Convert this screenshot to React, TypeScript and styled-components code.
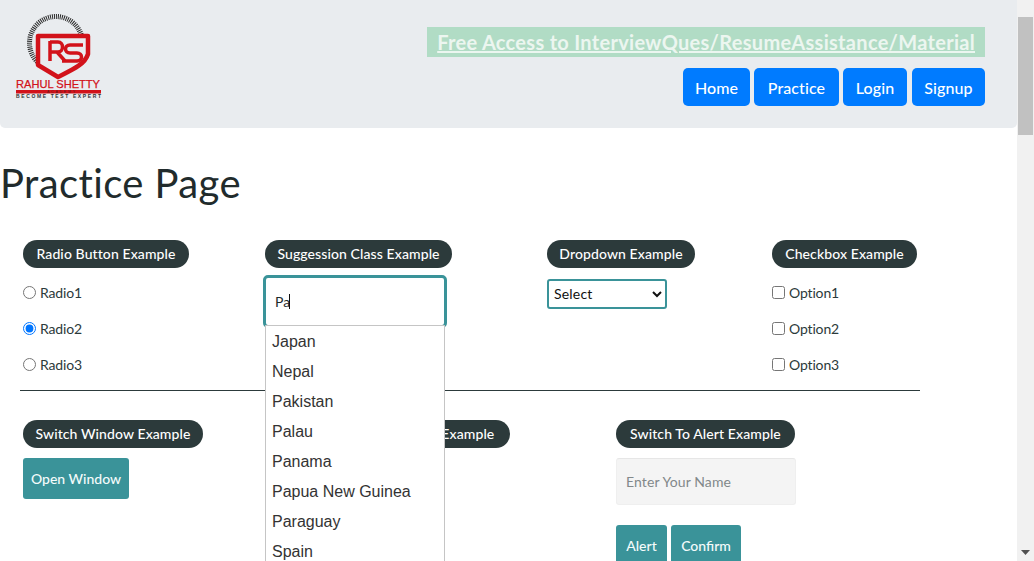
import styled, { createGlobalStyle } from "styled-components";

const GlobalStyle = createGlobalStyle`
  html, body {
    margin: 0;
    padding: 0;
    height: 100%;
    overflow: hidden;
    background: #fff;
  }
  * {
    box-sizing: border-box;
  }
`;

const FONT = `"Lato", "Noto Sans", sans-serif`;

const Viewport = styled.div`
  display: flex;
  height: 561px;
  overflow: hidden;
  font-family: ${FONT};
  color: #2c3a3b;
`;

const Page = styled.main`
  width: 1017px;
  flex: none;
`;

const Scrollbar = styled.div`
  width: 17px;
  flex: none;
  display: flex;
  flex-direction: column;
  align-items: center;
  justify-content: space-between;
  background: #f1f1f1;
`;

const ScrollThumb = styled.div`
  width: 15px;
  height: 118px;
  margin-top: 17px;
  background: #c1c1c1;
`;

const ScrollArrow = styled.svg`
  width: 9px;
  height: 5px;
  margin-bottom: 6px;
  fill: #505050;
`;

const Header = styled.header`
  height: 128px;
  display: flex;
  justify-content: space-between;
  padding: 12px 32px 0 14px;
  background: #e9ecef;
  border-radius: 0 0 5px 5px;
`;

const Logo = styled.svg`
  width: 92px;
  height: 90px;
  flex: none;
`;

const HeaderRight = styled.div`
  display: flex;
  flex-direction: column;
  align-items: flex-end;
  padding-top: 15px;
`;

const PromoLink = styled.a`
  height: 30px;
  padding: 0 10px;
  background: #b1dcc5;
  color: #ecf6f0;
  font-size: 20px;
  font-weight: 700;
  letter-spacing: 0.3px;
  line-height: 30px;
  text-decoration: underline;
  white-space: nowrap;
`;

const Nav = styled.nav`
  display: flex;
  margin-top: 11px;
`;

const NavButton = styled.button<{ $width: number; $gap: number }>`
  width: ${(p) => p.$width}px;
  height: 38px;
  margin-left: ${(p) => p.$gap}px;
  padding: 0;
  border: none;
  border-radius: 5px;
  background: #007bff;
  color: #fff;
  font-family: ${FONT};
  font-size: 16px;
  font-weight: 500;
  letter-spacing: 0.1px;
`;

const Title = styled.h1`
  margin: 32px 0 34px;
  font-size: 40px;
  font-weight: 400;
  letter-spacing: 0.4px;
  line-height: 46px;
  color: #212b2c;
`;

const Row = styled.section<{ $columns: string; $height: number }>`
  display: grid;
  grid-template-columns: ${(p) => p.$columns};
  height: ${(p) => p.$height}px;
  padding-left: 23px;
`;

const Column = styled.div`
  display: flex;
  flex-direction: column;
  align-items: flex-start;
`;

const Legend = styled.div<{ $width: number }>`
  width: ${(p) => p.$width}px;
  height: 28px;
  flex: none;
  border-radius: 14px;
  background: #2c3a3b;
  color: #fff;
  font-size: 14px;
  font-weight: 500;
  letter-spacing: 0.1px;
  line-height: 27px;
  text-align: center;
  white-space: nowrap;
`;

const OptionList = styled.div`
  display: flex;
  flex-direction: column;
  gap: 16px;
  margin-top: 15px;
`;

const OptionLabel = styled.label`
  display: flex;
  align-items: center;
  gap: 4px;
  height: 20px;
  font-size: 14px;
  letter-spacing: -0.15px;
  line-height: 20px;
  white-space: nowrap;
`;

const RadioInput = styled.input.attrs({ type: "radio" })`
  width: 13px;
  height: 13px;
  margin: 0 0 2px;
`;

const CheckInput = styled.input.attrs({ type: "checkbox" })`
  width: 13px;
  height: 13px;
  margin: 0 0 2px;
`;

const SuggestionBox = styled.div`
  position: relative;
  width: 184px;
  margin: 7px 0 0 -2px;
`;

const SuggestionInput = styled.input`
  display: block;
  width: 184px;
  height: 53px;
  padding: 0 9px;
  border: 3px solid #3a9399;
  border-radius: 5px;
  outline: none;
  background: #fff;
  color: #1d2a2b;
  font-family: ${FONT};
  font-size: 14px;
  caret-color: transparent;
`;

const Caret = styled.span`
  position: absolute;
  left: 26px;
  top: 19px;
  width: 1px;
  height: 15px;
  background: #111;
`;

const SuggestionMenu = styled.ul`
  position: absolute;
  z-index: 2;
  left: 2px;
  top: 50px;
  width: 180px;
  margin: 0;
  padding: 1px 0 0;
  list-style: none;
  border: 1px solid #c5c5c5;
  background: #fff;
`;

const SuggestionItem = styled.li`
  height: 30px;
  padding-left: 6px;
  color: #333;
  font-family: "Liberation Sans", Arial, sans-serif;
  font-size: 16px;
  line-height: 30px;
`;

const Dropdown = styled.select`
  width: 120px;
  height: 30px;
  margin-top: 11px;
  padding: 0 0 2px 1px;
  border: 2px solid #3a9399;
  border-radius: 3px;
  background: #fff;
  color: #111;
  font-family: ${FONT};
  font-size: 14px;
  letter-spacing: 0.2px;
`;

const Divider = styled.hr`
  width: 900px;
  height: 1px;
  margin: 0 0 29px 20px;
  border: none;
  background: #2c3a3b;
`;

const ActionButton = styled.button<{ $width: number }>`
  width: ${(p) => p.$width}px;
  height: 41px;
  padding: 0;
  border: none;
  border-radius: 3px;
  background: #3a9399;
  color: #f4fbfb;
  font-family: ${FONT};
  font-size: 14px;
  font-weight: 500;
  white-space: nowrap;
`;

const OpenWindowButton = styled(ActionButton)`
  margin-top: 10px;
`;

const NameInput = styled.input`
  width: 180px;
  height: 47px;
  margin-top: 10px;
  padding: 0 9px;
  border: 1px solid #efefef;
  border-top-color: #e6e6e6;
  border-radius: 3px;
  background: #f4f4f4;
  font-family: ${FONT};
  font-size: 14px;
  letter-spacing: 0.1px;
  &::placeholder {
    color: #82888a;
    opacity: 1;
  }
`;

const AlertActions = styled.div`
  display: flex;
  gap: 4px;
  margin-top: 20px;
`;

const RADIOS = ["Radio1", "Radio2", "Radio3"];
const OPTIONS = ["Option1", "Option2", "Option3"];
const COUNTRIES = ["Japan", "Nepal", "Pakistan", "Palau", "Panama", "Papua New Guinea", "Paraguay", "Spain"];

const App = () => {
  return (
    <>
      <GlobalStyle />
      <Viewport>
        <Page>
          <Header>
            <Logo viewBox="0 0 92 90" role="img" aria-label="Rahul Shetty Academy">
              <circle cx="42" cy="31" r="26.5" fill="none" stroke="#2a2a2a" strokeWidth="5" strokeDasharray="1 1" />
              <path
                d="M24 24H74V42C71 52 60 57 44 65L24 53Z"
                fill="#e9ecef"
                stroke="#d2121a"
                strokeWidth="4.5"
                strokeLinejoin="round"
              />
              <path d="M36 29V49M36 30H44C50 30 50 40 44 40H36M43 40L51 49" fill="none" stroke="#d2121a" strokeWidth="3.5" />
              <path
                d="M69 33H56C50 33 50 41 56 41H63C69 41 69 49 63 49H48"
                fill="none"
                stroke="#d2121a"
                strokeWidth="3.5"
              />
              <text x="2" y="76" fontFamily="Liberation Sans" fontSize="11" fill="#d2121a" stroke="#d2121a" strokeWidth="0.25" textLength="84" lengthAdjust="spacingAndGlyphs">
                RAHUL SHETTY
              </text>
              <rect x="2" y="78" width="85" height="3.5" fill="#d2121a" />
              <text x="33" y="81" fontFamily="Liberation Sans" fontSize="3.5" fill="#5a1a1a" textLength="28">
                ACADEMY
              </text>
              <text x="2" y="86" fontFamily="Liberation Sans" fontSize="5" fontWeight="700" fill="#333" textLength="85">
                BECOME TEST EXPERT
              </text>
            </Logo>
            <HeaderRight>
              <PromoLink href="#">Free Access to InterviewQues/ResumeAssistance/Material</PromoLink>
              <Nav>
                <NavButton $width={67} $gap={0}>Home</NavButton>
                <NavButton $width={85} $gap={4}>Practice</NavButton>
                <NavButton $width={64} $gap={4}>Login</NavButton>
                <NavButton $width={73} $gap={5}>Signup</NavButton>
              </Nav>
            </HeaderRight>
          </Header>

          <Title>Practice Page</Title>

          <Row $columns="242px 282px 225px 1fr" $height={150}>
            <Column>
              <Legend $width={166}>Radio Button Example</Legend>
              <OptionList>
                {RADIOS.map((r) => (
                  <OptionLabel key={r}>
                    <RadioInput name="radio" defaultChecked={r === "Radio2"} />
                    {r}
                  </OptionLabel>
                ))}
              </OptionList>
            </Column>
            <Column>
              <Legend $width={187}>Suggession Class Example</Legend>
              <SuggestionBox>
                <SuggestionInput defaultValue="Pa" />
                <Caret />
                <SuggestionMenu>
                  {COUNTRIES.map((c) => (
                    <SuggestionItem key={c}>{c}</SuggestionItem>
                  ))}
                </SuggestionMenu>
              </SuggestionBox>
            </Column>
            <Column>
              <Legend $width={148}>Dropdown Example</Legend>
              <Dropdown defaultValue="">
                <option value="">Select</option>
                <option value="1">Option1</option>
                <option value="2">Option2</option>
                <option value="3">Option3</option>
              </Dropdown>
            </Column>
            <Column>
              <Legend $width={145}>Checkbox Example</Legend>
              <OptionList>
                {OPTIONS.map((o) => (
                  <OptionLabel key={o}>
                    <CheckInput />
                    {o}
                  </OptionLabel>
                ))}
              </OptionList>
            </Column>
          </Row>

          <Divider />

          <Row $columns="332px 261px 1fr" $height={200}>
            <Column>
              <Legend $width={180}>Switch Window Example</Legend>
              <OpenWindowButton $width={106}>Open Window</OpenWindowButton>
            </Column>
            <Column>
              <Legend $width={155}>Switch Tab Example</Legend>
            </Column>
            <Column>
              <Legend $width={179}>Switch To Alert Example</Legend>
              <NameInput placeholder="Enter Your Name" />
              <AlertActions>
                <ActionButton $width={51}>Alert</ActionButton>
                <ActionButton $width={70}>Confirm</ActionButton>
              </AlertActions>
            </Column>
          </Row>
        </Page>
        <Scrollbar>
          <ScrollThumb />
          <ScrollArrow viewBox="0 0 9 5">
            <path d="M0 0H9L4.5 5Z" />
          </ScrollArrow>
        </Scrollbar>
      </Viewport>
    </>
  );
};

export default App;
